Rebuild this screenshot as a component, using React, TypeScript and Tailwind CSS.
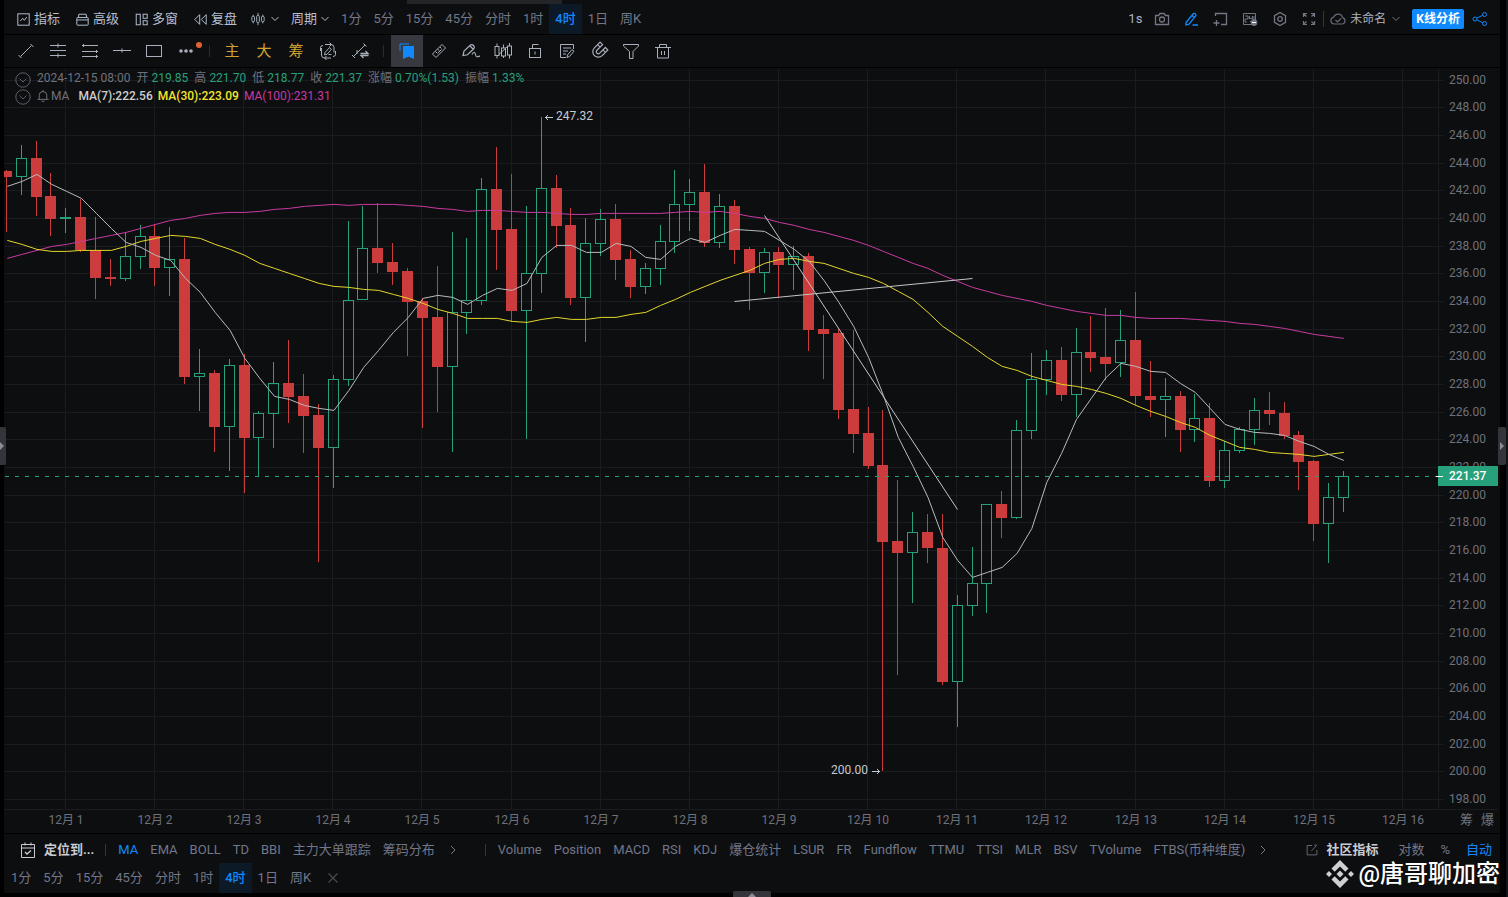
import type { ReactNode } from "react";

type Candle = [up: 0 | 1, high: number, top: number, bottom: number, low: number];

// plot coordinates, one entry per 4 hour bar
const CANDLES: Candle[] = [
  [0, 170, 171, 177, 232], [1, 145, 158, 177, 195], [0, 141, 158, 197, 216], [0, 173, 196, 219, 236],
  [1, 208, 217, 219, 233], [0, 199, 217, 250, 252], [0, 217, 250, 278, 299], [0, 259, 277, 279, 286],
  [1, 232, 256, 279, 281], [1, 225, 236, 257, 269], [0, 224, 236, 268, 286], [1, 227, 259, 268, 296],
  [0, 238, 259, 377, 384], [1, 349, 373, 377, 411], [0, 370, 373, 427, 452], [1, 359, 365, 427, 471],
  [0, 354, 365, 438, 493], [1, 411, 413, 438, 476], [1, 362, 383, 414, 448], [0, 340, 383, 397, 423],
  [0, 374, 396, 416, 453], [0, 404, 415, 448, 562], [1, 375, 379, 448, 488], [1, 221, 300, 380, 386],
  [1, 206, 248, 300, 300], [0, 203, 248, 263, 273], [0, 243, 262, 272, 285], [0, 268, 271, 302, 356],
  [0, 298, 301, 318, 428], [0, 266, 317, 367, 412], [1, 232, 312, 367, 452], [1, 238, 300, 313, 334],
  [1, 178, 189, 301, 305], [0, 147, 189, 230, 270], [0, 174, 229, 311, 321], [1, 206, 273, 311, 439],
  [1, 117, 188, 274, 293], [0, 175, 188, 226, 248], [0, 208, 225, 298, 305], [1, 218, 243, 298, 342],
  [1, 209, 219, 244, 256], [0, 204, 219, 260, 280], [0, 250, 259, 287, 298], [1, 263, 268, 287, 294],
  [1, 225, 241, 269, 285], [1, 170, 204, 242, 253], [1, 179, 192, 205, 231], [0, 164, 192, 243, 247],
  [1, 194, 206, 243, 248], [0, 200, 206, 250, 264], [0, 247, 249, 273, 310], [1, 248, 252, 273, 293],
  [0, 247, 252, 265, 298], [1, 246, 256, 265, 290], [0, 253, 256, 330, 351], [0, 315, 329, 334, 379],
  [0, 329, 333, 410, 419], [0, 330, 409, 434, 453], [0, 407, 433, 466, 469], [0, 410, 465, 542, 771],
  [0, 480, 541, 553, 675], [1, 512, 532, 553, 603], [0, 514, 532, 548, 563], [0, 514, 548, 682, 685],
  [1, 595, 605, 682, 727], [1, 547, 583, 606, 616], [1, 504, 504, 584, 613], [0, 491, 504, 518, 538],
  [1, 420, 430, 518, 519], [1, 353, 379, 431, 439], [1, 350, 360, 380, 395], [0, 347, 360, 395, 401],
  [1, 328, 352, 395, 417], [0, 316, 352, 358, 372], [0, 308, 357, 364, 380], [1, 310, 340, 363, 377],
  [0, 292, 340, 396, 405], [0, 361, 396, 400, 417], [1, 378, 396, 400, 437], [0, 391, 396, 430, 452],
  [1, 394, 418, 430, 442], [0, 403, 418, 481, 487], [1, 441, 450, 481, 488], [1, 427, 429, 451, 453],
  [1, 398, 410, 430, 445], [0, 392, 410, 414, 425], [0, 402, 413, 436, 439], [0, 431, 435, 462, 490],
  [0, 460, 461, 524, 541], [1, 483, 497, 524, 563], [1, 471, 476, 498, 512],
];

const MA7 = [
  186, 181, 174, 184, 191, 198, 213, 228, 242, 247, 255, 260, 278, 292, 312, 330, 358, 378, 396, 399, 405, 408, 410,
  390, 367, 350, 332, 317, 298, 295, 297, 304, 295, 288, 290, 283, 257, 245, 245, 252, 252, 243, 246, 257,
  259, 246, 238, 242, 235, 229, 230, 231, 240, 249, 261, 280, 302, 326, 357, 395, 437, 466, 497, 537, 560, 577,
  572, 567, 553, 528, 482, 453, 419, 398, 377, 363, 366, 371, 372, 383, 392, 408, 424, 429, 432, 433, 435, 441, 446, 454, 460,
];

const MA30 = [
  240, 244, 249, 251, 251, 250, 250, 250, 246, 241, 238, 235, 236, 238, 244, 249, 255, 263, 268, 273, 278, 283, 286,
  287, 289, 290, 294, 298, 303, 309, 313, 318, 318, 318, 321, 322, 319, 317, 319, 319, 317, 317, 314, 312,
  305, 299, 292, 286, 280, 275, 270, 263, 259, 258, 261, 263, 268, 273, 277, 283, 291, 299, 312, 326, 336, 346,
  357, 366, 370, 376, 380, 384, 386, 389, 393, 398, 405, 411, 416, 422, 427, 435, 441, 447, 449, 452, 453, 454, 456, 454, 452,
];

const MA100 = [
  258, 254, 250, 246, 244, 241, 238, 235, 232, 228, 224, 220, 218, 215, 213, 212, 212, 211, 209, 208, 206, 205, 204,
  205, 204, 204, 204, 205, 206, 208, 209, 211, 210, 210, 211, 212, 212, 213, 214, 214, 213, 213, 213, 213,
  213, 212, 211, 212, 211, 213, 216, 218, 222, 225, 229, 232, 236, 240, 245, 251, 257, 263, 268, 275, 281, 287,
  291, 295, 298, 301, 305, 308, 311, 313, 315, 315, 317, 318, 318, 318, 319, 320, 321, 323, 324, 326, 328, 331, 334, 336, 338,
];

const UP = "#26a17b";
const DOWN = "#cd3c3c";

const candleX = (i: number) => Math.floor(6.4 + i * 14.856);
const toPoints = (ys: number[]) => ys.map((y, i) => `${(7.3 + i * 14.85).toFixed(1)},${y + 0.4}`).join(" ");

const PRICES = Array.from({ length: 27 }, (_, i) => 250 - i * 2);
const priceY = (price: number) => Math.floor(80.3 + (250 - price) * 13.83);
const DAYS = Array.from({ length: 16 }, (_, i) => i + 1);
const dayX = (day: number) => Math.floor(65.3 + (day - 1) * 89.15);

const PERIODS = ["1分", "5分", "15分", "45分", "分时", "1时", "4时", "1日", "周K"];
const MAIN_INDICATORS = ["MA", "EMA", "BOLL", "TD", "BBI", "主力大单跟踪", "筹码分布"];
const SUB_INDICATORS = [
  "Volume", "Position", "MACD", "RSI", "KDJ", "爆仓统计", "LSUR", "FR", "Fundflow",
  "TTMU", "TTSI", "MLR", "BSV", "TVolume", "FTBS(币种维度)",
];

const Icon = ({ children, className = "h-4 w-4" }: { children: ReactNode; className?: string }) => (
  <svg viewBox="0 0 16 16" fill="none" stroke="currentColor" className={`shrink-0 overflow-visible ${className}`} aria-hidden="true">
    {children}
  </svg>
);

const Chevron = () => (
  <svg viewBox="0 0 8 6" fill="none" stroke="currentColor" className="h-1.5 w-2 shrink-0" aria-hidden="true">
    <path d="M.5 1 4 4.5 7.5 1" />
  </svg>
);

const MenuButton = ({ icon, label }: { icon: ReactNode; label: string }) => (
  <button className="flex items-center gap-1 px-2">
    <Icon className="h-[13px] w-[13px]">{icon}</Icon>
    {label}
  </button>
);

const Periods = () => (
  <>
    {PERIODS.map((period) => (
      <button
        key={period}
        className={`h-full px-1.5 ${period === "4时" ? "bg-[#0c1a27] font-medium text-[#1089ff]" : "text-[#727789]"}`}
      >
        {period}
      </button>
    ))}
  </>
);

const TopBar = () => (
  <header className="flex h-[34px] items-center justify-between text-[#b4bfd0]">
    <div className="flex h-full items-end pl-[5px]">
      <div className="flex h-[30px] items-center">
        <MenuButton
          label="指标"
          icon={<g strokeWidth="1.2"><rect x="1" y="1" width="14" height="14" /><path d="m4 10 3-3.5 2 2.5 3-4" /></g>}
        />
        <MenuButton
          label="高级"
          icon={<g strokeWidth="1.2"><rect x="1" y="5.5" width="14" height="9.5" rx="1" /><path d="M3 5.5 3.5 1.5h9l.5 4M1 8.5h14" /></g>}
        />
        <MenuButton
          label="多窗"
          icon={<g strokeWidth="1.2"><rect x="1.5" y="1.5" width="5" height="13" /><rect x="10" y="1.5" width="5" height="5" /><rect x="10" y="9.5" width="5" height="5" /></g>}
        />
        <MenuButton
          label="复盘"
          icon={<path d="M7 2v12L1 8zM15 2v12L9 8z" strokeWidth="1.2" />}
        />
        <button className="flex items-center gap-1.5 px-1.5" aria-label="K线样式">
          <Icon className="h-3.5 w-3.5">
            <path d="M2.5 3v2M2.5 11v2M8 1v3M8 12v3M13.5 3v2M13.5 11v2" />
            <rect x="1" y="5" width="3" height="6" rx="1" />
            <rect x="6.5" y="4" width="3" height="8" rx="1" />
            <rect x="12" y="5" width="3" height="6" rx="1" />
          </Icon>
          <Chevron />
        </button>
        <button className="flex items-center gap-1 px-1.5">周期 <Chevron /></button>
        <Periods />
      </div>
    </div>

    <div className="flex h-full items-center pr-3 pt-1 text-[#727784]">
      <button className="mr-3 text-[#aab3c0]">1s</button>
      <button className="mr-3.5" aria-label="截图">
        <Icon>
          <path d="M1.5 4.5h3l1.5-2h4l1.5 2h3v9h-13z" strokeWidth="1.3" />
          <circle cx="8" cy="8.5" r="2.5" strokeWidth="1.3" />
        </Icon>
      </button>
      <button className="mr-3 text-[#1089ff]" aria-label="画线">
        <Icon>
          <path d="m2 11.5 7-8.5a1.5 1.5 0 0 1 2.5 2.2l-6.5 8-3 .8zM8 4.5l2.3 2M8.5 14H14" strokeWidth="1.3" />
        </Icon>
      </button>
      <button className="mr-3.5" aria-label="新窗口">
        <Icon><path d="M3.5 5V2.5h11v11H9M4.5 9v6M1.5 12h6" strokeWidth="1.3" /></Icon>
      </button>
      <button className="mr-3.5" aria-label="广告屏蔽">
        <Icon>
          <path d="M11 13.5H1.5v-11h12V9M3 5h3v3H3v3h2M7.5 5v3l1.5-1 1.5 1V5M12 5v3M8 10.5h2" />
          <circle cx="12" cy="11.5" r="3" fill="currentColor" />
          <path d="M10 11.5h4" stroke="#fff" />
        </Icon>
      </button>
      <button className="mr-[13px]" aria-label="设置">
        <Icon>
          <path d="M8 1.5 13.5 4.7v6.6L8 14.5l-5.5-3.2V4.7z" strokeWidth="1.3" />
          <circle cx="8" cy="8" r="2.3" strokeWidth="1.3" />
        </Icon>
      </button>
      <button className="mr-1.5" aria-label="全屏">
        <Icon><path d="M2.5 6V2.5H6M10 2.5h3.5V6M13.5 10v3.5H10M6 13.5H2.5V10M2.5 2.5l3 3M13.5 2.5l-3 3M13.5 13.5l-3-3M2.5 13.5l3-3" strokeWidth="1.2" /></Icon>
      </button>
      <span className="mr-1.5 h-4 w-px bg-[#34363c]" />
      <button className="mr-3 flex items-center gap-1 text-xs text-[#aab3c0]">
        <Icon className="h-4 w-4 text-[#656974]">
          <path d="M4 13a3.5 3.5 0 0 1-.3-6.9 4.6 4.6 0 0 1 8.800.5A3.300 3.300 0 0 1 12.500 13zM5.500 9l2 2 3.500-3.500" strokeWidth="1.2" />
        </Icon>
        未命名
        <span className="ml-0.5 text-[#727784]"><Chevron /></span>
      </button>
      <button className="mr-2 h-5 rounded-xs bg-[#1089ff] px-1 text-xs font-bold text-white">K线分析</button>
      <button className="text-[#1089ff]" aria-label="分享">
        <Icon>
          <circle cx="3" cy="8" r="2" /><circle cx="12.5" cy="3.5" r="2" /><circle cx="12.5" cy="12.5" r="2" />
          <path d="m5 7 5.7-2.700M5 9l5.700 2.700" />
        </Icon>
      </button>
    </div>
  </header>
);

const Tool = ({ label, active, children }: { label: string; active?: boolean; children: ReactNode }) => (
  <button
    aria-label={label}
    className={`flex h-full w-8 items-center justify-center ${active ? "ml-px bg-[#36393f] text-[#1089ff]" : ""}`}
  >
    <Icon>{children}</Icon>
  </button>
);

const TextTool = ({ label }: { label: string }) => (
  <button className="h-full w-8 text-[15px] text-[#d3a22e]">{label}</button>
);

const Separator = () => (
  <span className="flex w-3.5 items-center justify-center"><span className="h-3 w-px bg-[#292b31]" /></span>
);

const DrawBar = () => (
  <div className="flex h-8 items-center pl-1.5 text-[#a9b0bb]">
    <Tool label="线段"><path d="M2.5 13.5l11-11M.5 12l3 3M12.5 1l3 3" /></Tool>
    <Tool label="平行线"><path d="M0 2.5h16M0 7.5h16M0 12.5h16M8 .5v4M8 10.5v4" /></Tool>
    <Tool label="斐波那契"><path d="M0 2.5h16M0 8.5h16M0 13.5h16M1.5 1v3M14.5 7v3M14.5 12v3" /></Tool>
    <Tool label="水平线"><path d="M-1 7.5h18M8 5.5v4" /></Tool>
    <Tool label="矩形"><rect x=".5" y="2.5" width="15" height="11" /></Tool>
    <Tool label="更多">
      <g fill="currentColor" stroke="none">
        <circle cx="3" cy="8" r="1.8" /><circle cx="8" cy="8" r="1.8" /><circle cx="13" cy="8" r="1.8" />
        <circle cx="21" cy="2" r="3" fill="#e0622d" />
      </g>
    </Tool>
    <Separator />
    <TextTool label="主" />
    <TextTool label="大" />
    <TextTool label="筹" />
    <Tool label="循环画线">
      <path d="M5 1.5h6q3 0 3 3v5M11 15H4.500q-3 0-3-3V5M9.500-.5l2 2-2 2M6.500 13l-2 2 2 2M.5 8V4.500q0-2 2.500-2M15.500 8v3.500q0 2-2.500 2" />
      <path d="m5 9.500 4.500-5 2 1.800-4.500 5-2.500.5zM8.500 11.500h3" />
    </Tool>
    <Tool label="画线切换">
      <path d="M1.500 13.500 13 2M0 12l3 3M11.500.5l3 3M5 7v4" />
      <path d="M8.500 10.500h7.500l-2.500-2.500M16.500 12.500H9l2.500 2.500" strokeWidth="1.3" />
    </Tool>
    <Separator />
    <Tool label="收藏" active>
      <path d="M1 8V1h9" />
      <path d="M4 3h11v13l-5.500-2.500L4 16z" fill="currentColor" stroke="none" />
    </Tool>
    <Tool label="测量">
      <path d="m1.500 11 9.500-9.500 3.500 3.500L5 14.500zM6.500 6l1.700 1.700M4.300 8.300 6 10M9 4l1.500 1.500" />
      <path d="m6.500 10.500 4-4" />
    </Tool>
    <Tool label="画笔">
      <path d="m0 12.500 1-4.500 6.500-6q1.500-1 3 .5t.5 3L4.500 11.800zM7 3l3 3M9 11.500c1.500-3 3-3 3.500 0s1.500 2.500 4.500 1.500" strokeWidth="1.2" />
    </Tool>
    <Tool label="形态">
      <rect x="0" y="3.500" width="4" height="9" /><rect x="6.500" y="5" width="4" height="8" /><rect x="12.500" y="3" width="4" height="9" />
      <path d="M2 .5v3M2 12.500v3M8.500 1.500V5M8.500 13v2M14.500 0v3M14.500 12v3.500M4 11.500l8.500-8" />
    </Tool>
    <Tool label="锁定">
      <rect x="2.500" y="5.500" width="11" height="9" />
      <path d="M5.500 5.500V1.500h6M8 8.500v3" />
    </Tool>
    <Tool label="笔记">
      <path d="M7 14.500H1.500v-13h13V6M4 5h8M4 8h5M4 11h3" />
      <path d="m8.500 12 4.500-5.500 2 1.700-4.500 5.300-2.500 1z" />
    </Tool>
    <Tool label="磁铁">
      <g transform="rotate(45 8 8)" strokeWidth="1.2">
        <path d="M2.500 1v8a5.500 5.500 0 0 0 11 0V1H10v8a2 2 0 0 1-4 0V1zM2.500 4.500H6M10 4.500h3.500" />
      </g>
    </Tool>
    <Tool label="筛选"><path d="M.5 1.500h15v1.500L10 8.500v7H6.500v-7L.5 3z" /></Tool>
    <Tool label="删除">
      <path d="M0 4.500h16M4.500 4.500v-3h7v3M2.500 4.500v10.500h11V4.500M6.500 8v4M9.500 8v4" />
    </Tool>
  </div>
);

const CircleChevron = () => (
  <Icon className="h-4 w-4 text-[#5b5e67]">
    <circle cx="8" cy="8" r="7.200" />
    <path d="m4.500 6.500 3.500 3.500 3.500-3.500" />
  </Icon>
);

const Quote = ({ label, value }: { label: string; value: string }) => (
  <span className="flex gap-[3px]">
    {label}
    <span className="text-[#26a17b]">{value}</span>
  </span>
);

const Legend = () => (
  <div className="absolute left-[11px] top-0 text-xs text-[#6f727c]">
    <div className="flex h-5 items-center gap-1.5">
      <button aria-label="收起行情" className="pt-1"><CircleChevron /></button>
      <span>2024-12-15 08:00</span>
      <Quote label="开" value="219.85" />
      <Quote label="高" value="221.70" />
      <Quote label="低" value="218.77" />
      <Quote label="收" value="221.37" />
      <Quote label="涨幅" value="0.70%(1.53)" />
      <Quote label="振幅" value="1.33%" />
    </div>
    <div className="flex h-4 items-center gap-[5px]">
      <button aria-label="收起指标" className="pr-px pt-0.5"><CircleChevron /></button>
      <span className="mr-1 flex items-center gap-0.5">
        <Icon className="h-3 w-3"><path d="M3 12.500V7a5 5 0 0 1 10 0v5.500M.5 12.500h15M6 14.500q2 2 4 0M8 0v2" strokeWidth="1.3" /></Icon>
        MA
      </span>
      <span className="font-medium text-[#cfcfd1]">MA(7):222.56</span>
      <span className="font-medium text-[#f3e52d]">MA(30):223.09</span>
      <span className="text-[#c93aa0]">MA(100):231.31</span>
    </div>
  </div>
);

const Chart = () => (
  <svg viewBox="4 68 1496 765" className="block h-auto w-full" role="img" aria-label="4小时K线图">
    <g stroke="#1b1c20">
      {PRICES.map((p) => <path key={p} d={`M5 ${priceY(p) + 0.5}H1443`} />)}
      {DAYS.map((d) => <path key={d} d={`M${dayX(d) + 0.5} 69V809`} />)}
      <path d="M1438.5 69V809M4 809.5H1498" />
    </g>

    {CANDLES.map(([up, high, top, bottom, low], i) => {
      const x = candleX(i);
      return up ? (
        <g key={i} stroke={UP} fill="none">
          <path d={`M${x + 0.5} ${high}V${top}M${x + 0.5} ${bottom}V${low}`} />
          <rect x={x - 4.5} y={top + 0.5} width="10" height={bottom - top - 1} />
        </g>
      ) : (
        <g key={i} stroke={DOWN} fill={DOWN}>
          <path d={`M${x + 0.5} ${high}V${low}`} />
          <rect x={x - 5} y={top} width="11" height={bottom - top} stroke="none" />
        </g>
      );
    })}

    <g fill="none">
      <polyline points={toPoints(MA100)} stroke="#c93aa0" />
      <polyline points={toPoints(MA30)} stroke="#e3d62b" />
      <polyline points={toPoints(MA7)} stroke="#b9babd" />
      <path d="M764.5 215.5 957.5 509.5M734.5 301.5 972.5 278.5" stroke="#c4c5c8" />
      <path d="M5 476.5H1438" stroke={UP} strokeDasharray="4 6" />
    </g>

    <g fill="#c6cad2" fontSize="12">
      <text x="556" y="120">247.32</text>
      <text x="831" y="774">200.00</text>
    </g>
    <path d="M545 117.5h8M548 115l-2.500 2.500 2.500 2.500M872 771.5h8M877 769l2.500 2.500-2.500 2.500" fill="none" stroke="#c6cad2" />

    <g fill="#6f727c" fontSize="12">
      {PRICES.map((p) => <text key={p} x="1449" y={priceY(p) + 4}>{p.toFixed(2)}</text>)}
      {DAYS.map((d) => <text key={d} x={dayX(d) + 1} y="824" textAnchor="middle">{`12月 ${d}`}</text>)}
      <text x="1460" y="824" fontSize="13">筹</text>
      <text x="1481" y="824" fontSize="13">爆</text>
    </g>

    <rect x="1438" y="466" width="60" height="20" fill={UP} />
    <path d="M1436 476.5h7" stroke="#fff" />
    <text x="1449" y="480" fontSize="12" fontWeight="500" fill="#fff">221.37</text>
  </svg>
);

const BottomBar = () => (
  <footer>
    <div className="flex h-[29px] items-center gap-3 whitespace-nowrap pl-4 pr-2 pt-0.5 text-[#727789]">
      <button className="flex items-center gap-2 font-bold text-[#c9ccd2]">
        <Icon>
          <path d="M1.500 2.500h13v13h-13zM1.500 6h13M5 .5v3M11 .5v3" />
          <path d="m5 10 2 2 4-3.500" strokeWidth="1.3" />
        </Icon>
        定位到...
      </button>
      <span className="-ml-px h-3 w-px bg-[#34363c]" />
      {MAIN_INDICATORS.map((name) => (
        <button key={name} className={name === "MA" ? "text-[#1089ff]" : ""}>{name}</button>
      ))}
      <button aria-label="更多主图指标" className="ml-0.5"><Icon className="h-3 w-2"><path d="m4 0 8 8-8 8" strokeWidth="2" /></Icon></button>
      <span className="ml-4 h-3 w-px bg-[#34363c]" />
      {SUB_INDICATORS.map((name) => <button key={name}>{name}</button>)}
      <button aria-label="更多副图指标" className="ml-0.5"><Icon className="h-3 w-2"><path d="m4 0 8 8-8 8" strokeWidth="2" /></Icon></button>
      <div className="ml-auto flex items-center">
        <button className="flex items-center gap-2 font-bold text-[#c9ccd2]">
          <Icon className="h-3 w-3 text-[#656974]">
            <path d="M8 2H1.500v12.500h13V8M7 9.500 14 2M11 1.500h3.500" strokeWidth="1.3" />
          </Icon>
          社区指标
        </button>
        <button className="ml-5">对数</button>
        <button className="ml-4">%</button>
        <button className="ml-4 text-[#1089ff]">自动</button>
      </div>
    </div>
    <div className="flex h-[30px] items-center pl-px">
      <Periods />
      <button aria-label="关闭" className="ml-2.5 text-[#4a4c54]">
        <Icon className="h-3 w-3"><path d="m2 2 12 12M14 2 2 14" strokeWidth="1.500" /></Icon>
      </button>
    </div>
  </footer>
);

const Watermark = () => (
  <div className="absolute bottom-[7px] right-2 flex items-center gap-1 text-2xl leading-8 font-medium text-white">
    <svg viewBox="0 0 28 28" className="h-7 w-7" fill="#d0d0d2" aria-hidden="true">
      <path d="m14 0 8.500 8.500-3.200 3.200L14 6.400l-5.300 5.300-3.200-3.200zM14 28l8.500-8.500-3.200-3.200-5.300 5.300-5.300-5.300-3.200 3.200zM3 11l3 3-3 3-3-3zM25 11l3 3-3 3-3-3zM14 10.500l3.500 3.500-3.500 3.500-3.500-3.500z" />
    </svg>
    @唐哥聊加密
  </div>
);

const App = () => {
  return (
    <div className="relative min-h-screen overflow-hidden bg-black pl-1 pr-2 text-[13px] [font-family:Roboto,'Noto_Sans_CJK_SC',sans-serif]">
      <main className="flex flex-col gap-px bg-black *:bg-[#0d0e10]">
        <TopBar />
        <DrawBar />
        <section className="relative">
          <Chart />
          <Legend />
        </section>
        <BottomBar />
      </main>

      <span className="absolute left-[407px] top-0 h-1 w-[155px] bg-[#242529]" />
      <span className="absolute right-0 top-0 h-full w-0.5 bg-[#111215]" />

      <button aria-label="展开左侧栏" className="absolute left-0 top-[427px] flex h-[38px] w-1.5 items-center rounded-r-xs bg-[#33353b]">
        <svg viewBox="0 0 4 8" className="h-2 w-1" fill="#8a8d96"><path d="m0 0 4 4-4 4z" /></svg>
      </button>
      <button aria-label="展开右侧栏" className="absolute right-0.5 top-[427px] flex h-[38px] w-2 items-center justify-center rounded-xs bg-[#33353b]">
        <svg viewBox="0 0 4 8" className="h-2 w-1" fill="#8a8d96"><path d="m0 0 4 4-4 4z" /></svg>
      </button>
      <button aria-label="展开底部栏" className="absolute bottom-0 left-[733px] flex h-1.5 w-[38px] items-end justify-center rounded-t-xs bg-[#33353b]">
        <svg viewBox="0 0 8 4" className="h-1 w-2" fill="#8a8d96"><path d="m0 4 4-4 4 4z" /></svg>
      </button>
      <Watermark />
    </div>
  );
};

export default App;
